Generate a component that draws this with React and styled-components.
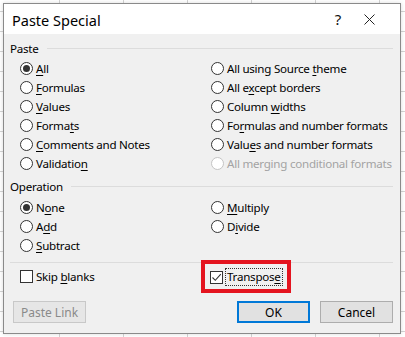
import React from 'react';
import styled, { createGlobalStyle } from 'styled-components';

const GlobalStyle = createGlobalStyle`
  html, body {
    margin: 0;
    padding: 0;
    width: 405px;
    height: 337px;
    overflow: hidden;
  }
  body {
    font-family: "Noto Sans", "DejaVu Sans", sans-serif;
    background-color: #ffffff;
    background-image:
      linear-gradient(to right, #d4d4d4 1px, transparent 1px),
      linear-gradient(to bottom, #d4d4d4 1px, transparent 1px);
    background-size: 64px 20px, 64px 20px;
    background-position: 59px 0, 0 -9px;
  }
`;

const Page = styled.div`
  padding: 3px 4px 3px 3px;
  width: 405px;
  height: 337px;
  box-sizing: border-box;
`;

const Dialog = styled.div`
  width: 398px;
  height: 331px;
  box-sizing: border-box;
  border: 1px solid #8a8a8a;
  background: #f0f0f0;
  display: flex;
  flex-direction: column;
  box-shadow: 0 0 4px rgba(0, 0, 0, 0.15);
`;

const TitleBar = styled.div`
  height: 30px;
  background: #ffffff;
  display: flex;
  align-items: center;
  padding-left: 8px;
  flex-shrink: 0;
`;

const Title = styled.div`
  flex: 1;
  font-size: 14.5px;
  color: #000;
  margin-top: 2px;
`;

const TitleButton = styled.div`
  width: ${p => p.$w}px;
  height: 30px;
  display: flex;
  align-items: center;
  justify-content: center;
  font-size: 15px;
  color: #111;
`;

const Body = styled.div`
  padding: 7px 7px 0 6px;
  display: flex;
  flex-direction: column;
  font-size: 11.6px;
  letter-spacing: -0.25px;
  color: #000;
`;

const Legend = styled.div`
  display: flex;
  align-items: center;
  height: 14px;
  margin-top: ${p => p.$top || 0}px;
  &::after {
    content: "";
    flex: 1;
    height: 1px;
    background: #dcdcdc;
    margin-left: 8px;
  }
`;

const Options = styled.div`
  display: grid;
  grid-template-columns: 191px 1fr;
  grid-auto-flow: ${p => p.$flow || 'column'};
  grid-template-rows: repeat(${p => p.$rows}, 19px);
  padding-left: 10px;
  margin-top: ${p => p.$top || 0}px;
`;

const Option = styled.label`
  display: flex;
  align-items: center;
  gap: 3px;
  white-space: nowrap;
  color: ${p => (p.$disabled ? '#a3a3a3' : '#000')};
`;

const Radio = styled.span`
  width: 13px;
  height: 13px;
  box-sizing: border-box;
  border-radius: 50%;
  border: 1px solid ${p => (p.$disabled ? '#c4c4c4' : '#333')};
  background: #fff;
  display: flex;
  align-items: center;
  justify-content: center;
  flex-shrink: 0;
  &::after {
    content: "";
    display: ${p => (p.$checked ? 'block' : 'none')};
    width: 7px;
    height: 7px;
    border-radius: 50%;
    background: #333;
  }
`;

const Key = styled.u`
  text-decoration-thickness: 1px;
  text-underline-offset: 2px;
`;

const Separator = styled.div`
  height: 1px;
  background: #dcdcdc;
  margin: 7px 0 0 0;
`;

const CheckRow = styled.div`
  display: grid;
  grid-template-columns: 181px 1fr;
  align-items: center;
  padding-left: 10px;
  margin-top: -3px;
`;

const Checkbox = styled.span`
  width: 13px;
  height: 13px;
  box-sizing: border-box;
  border: 1px solid #333;
  background: #fff;
  display: flex;
  align-items: center;
  justify-content: center;
  flex-shrink: 0;
`;

const Highlight = styled.div`
  justify-self: start;
  border: 4px solid #e4141f;
  padding: 5px 5px 4px 5px;
  display: flex;
  align-items: center;
  gap: 3px;
`;

const Focus = styled.span`
  outline: 1px dotted #333;
  outline-offset: 0;
  padding: 0 1px;
  line-height: 16px;
`;

const Buttons = styled.div`
  display: flex;
  align-items: center;
  margin-top: 8px;
  padding-left: 3px;
  gap: 10px;
  letter-spacing: 0;
  font-size: 12px;
`;

const Button = styled.div`
  width: 73px;
  height: 22px;
  box-sizing: border-box;
  display: flex;
  align-items: center;
  justify-content: center;
  border: ${p => (p.$default ? '2px' : '1px')} solid;
  color: ${p => (p.$disabled ? '#8a8a8a' : '#000')};
  border-color: ${p => (p.$disabled ? '#c8c8c8' : p.$default ? '#0078d7' : '#adadad')};
  background: ${p => (p.$disabled ? '#e6e6e6' : '#e1e1e1')};
  margin-left: ${p => (p.$push ? 'auto' : '0')};
`;

const pasteOptions = [
  { label: 'All', key: 0, checked: true },
  { label: 'Formulas', key: 0 },
  { label: 'Values', key: 0 },
  { label: 'Formats', key: 5 },
  { label: 'Comments and Notes', key: 0 },
  { label: 'Validation', key: 9 },
  { label: 'All using Source theme', key: 17 },
  { label: 'All except borders', key: 5 },
  { label: 'Column widths', key: 7 },
  { label: 'Formulas and number formats', key: 2 },
  { label: 'Values and number formats', key: 4 },
  { label: 'All merging conditional formats', disabled: true },
];

const operationOptions = [
  { label: 'None', key: 1, checked: true },
  { label: 'Multiply', key: 0 },
  { label: 'Add', key: 1 },
  { label: 'Divide', key: 1 },
  { label: 'Subtract', key: 0 },
];

const Label = ({ text, k }) => {
  if (k === undefined) return <span>{text}</span>;
  return (
    <span>
      {text.slice(0, k)}
      <Key>{text[k]}</Key>
      {text.slice(k + 1)}
    </span>
  );
};

const RadioOption = ({ opt }) => (
  <Option $disabled={opt.disabled}>
    <Radio $checked={opt.checked} $disabled={opt.disabled} />
    <Label text={opt.label} k={opt.key} />
  </Option>
);

const Tick = () => (
  <svg width="11" height="11" viewBox="0 0 11 11">
    <path d="M1.5 5.5 L4.3 8.3 L9.8 2.2" fill="none" stroke="#333" strokeWidth="1.1" />
  </svg>
);

const CloseIcon = () => (
  <svg width="11" height="11" viewBox="0 0 11 11">
    <path d="M0.5 0.5 L10.5 10.5 M10.5 0.5 L0.5 10.5" stroke="#222" strokeWidth="1" />
  </svg>
);

export default function App() {
  return (
    <Page>
      <GlobalStyle />
      <Dialog>
        <TitleBar>
          <Title>Paste Special</Title>
          <TitleButton $w={16}>?</TitleButton>
          <TitleButton $w={46}>
            <CloseIcon />
          </TitleButton>
          <TitleButton $w={8} />
        </TitleBar>
        <Body>
          <Legend>Paste</Legend>
          <Options $rows={6} $top={4}>
            {pasteOptions.map(o => (
              <RadioOption key={o.label} opt={o} />
            ))}
          </Options>
          <Legend $top={6}>Operation</Legend>
          <Options $rows={3} $flow="row" $top={5}>
            {operationOptions.map(o => (
              <RadioOption key={o.label} opt={o} />
            ))}
          </Options>
          <Separator />
          <CheckRow>
            <Option>
              <Checkbox />
              <span>
                Skip <Key>b</Key>lanks
              </span>
            </Option>
            <Highlight>
              <Checkbox>
                <Tick />
              </Checkbox>
              <Focus>
                Transpos<Key>e</Key>
              </Focus>
            </Highlight>
          </CheckRow>
          <Buttons>
            <Button $disabled>Paste Link</Button>
            <Button $default $push>OK</Button>
            <Button>Cancel</Button>
          </Buttons>
        </Body>
      </Dialog>
    </Page>
  );
}
